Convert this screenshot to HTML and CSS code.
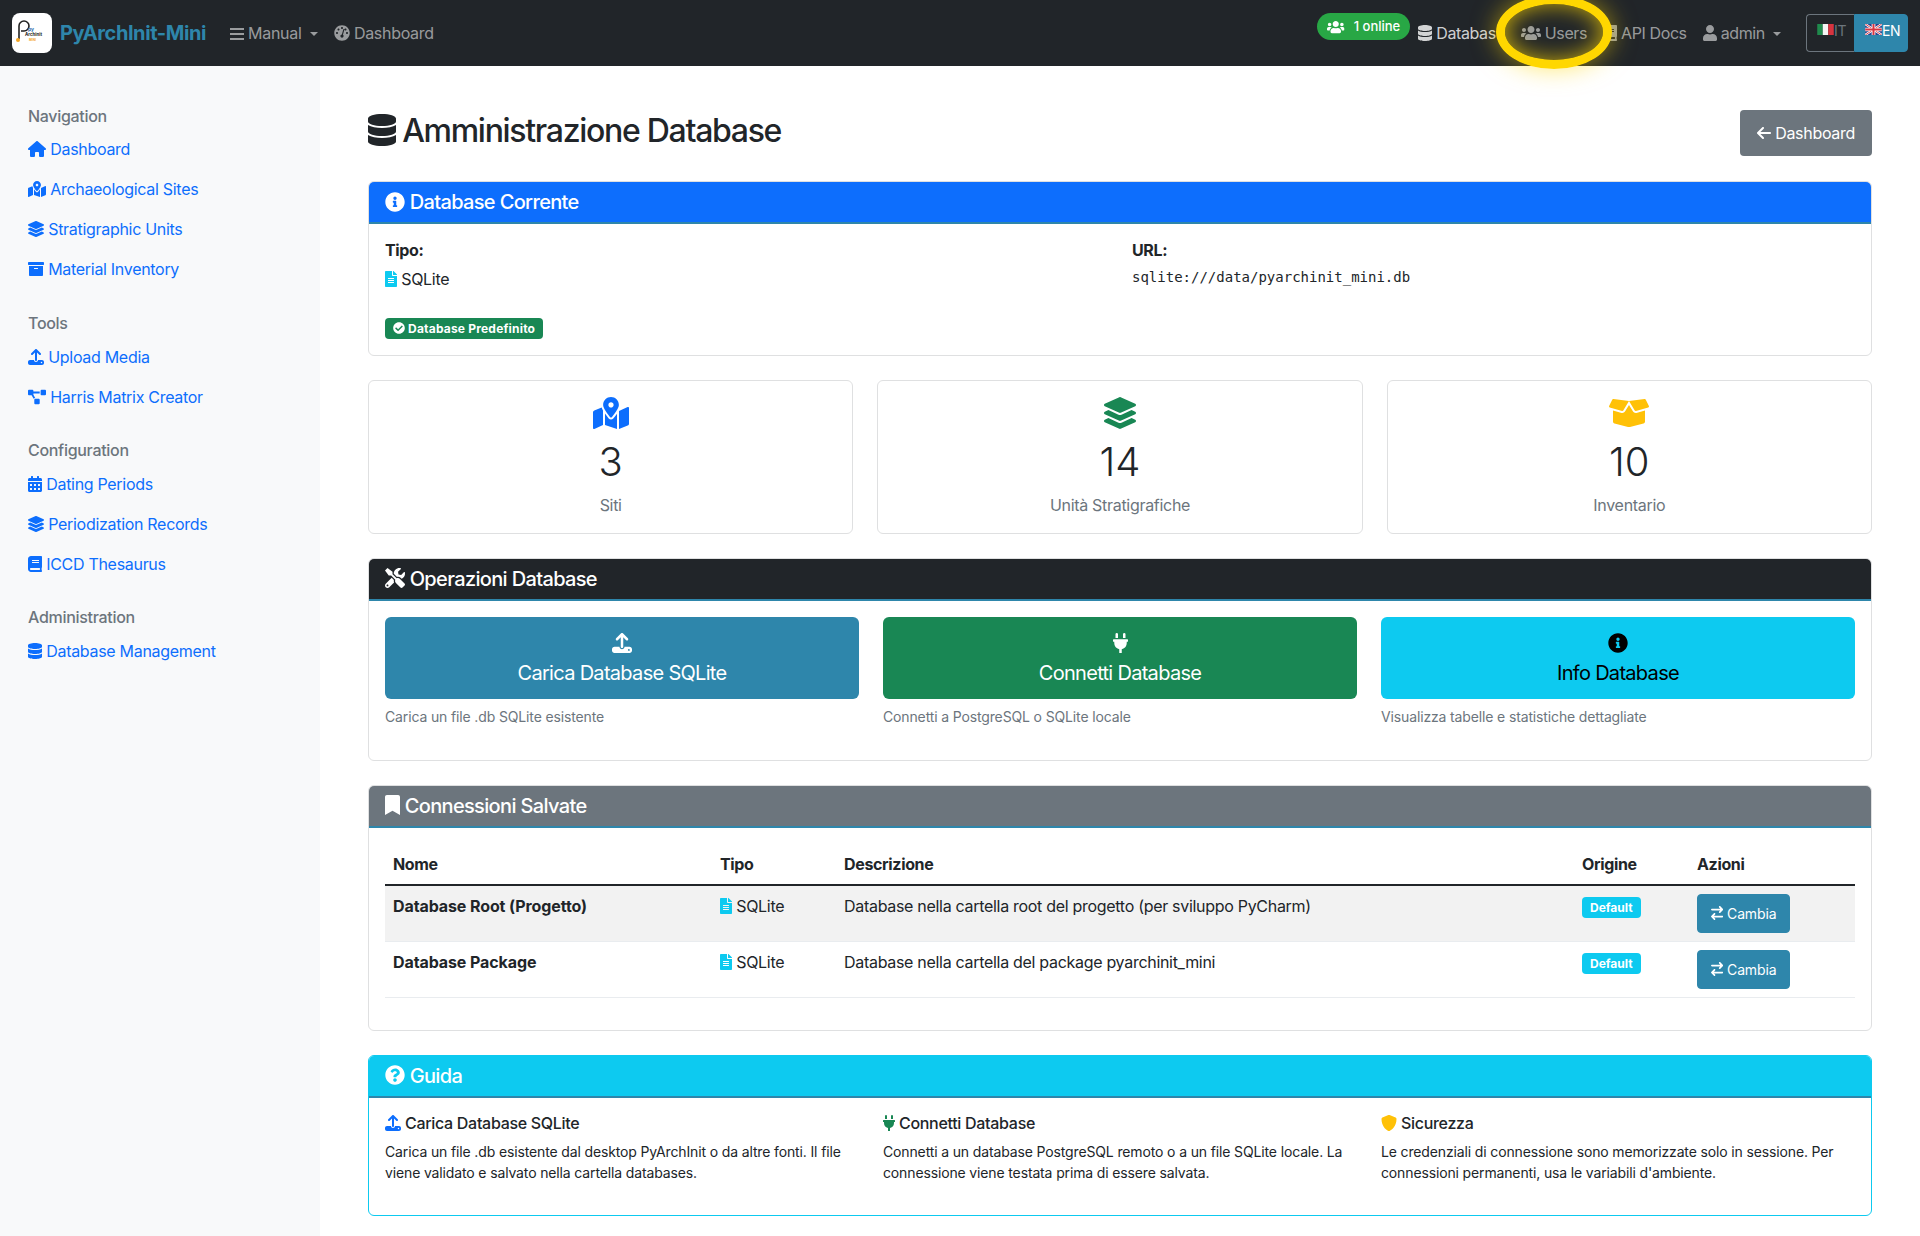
FILE: index.html
```html
<!DOCTYPE html>
<html lang="it">
<head>
  <meta charset="UTF-8" />
  <meta name="viewport" content="width=device-width, initial-scale=1.0"/>
  <title>Amministrazione Database - PyArchInit-Mini</title>
  <link rel="stylesheet" href="styles.css">
</head>
<body>

  <svg class="sprite" xmlns="http://www.w3.org/2000/svg">
    <symbol id="i-database" viewBox="0 0 448 512"><path d="M448 73.143v45.714C448 159.143 347.667 192 224 192S0 159.143 0 118.857V73.143C0 32.857 100.333 0 224 0s224 32.857 224 73.143zM448 176v102.857C448 319.143 347.667 352 224 352S0 319.143 0 278.857V176c48.125 33.143 136.208 48.572 224 48.572S399.874 209.143 448 176zm0 160v102.857C448 479.143 347.667 512 224 512S0 479.143 0 438.857V336c48.125 33.143 136.208 48.572 224 48.572S399.874 369.143 448 336z"/></symbol>
    <symbol id="i-home" viewBox="0 0 576 512"><path d="M575.8 255.5c0 18-15 32.1-32 32.1h-32l.7 160.2c0 2.7-.2 5.4-.5 8.1V472c0 22.1-17.9 40-40 40H456c-1.1 0-2.2 0-3.3-.1c-1.4 .1-2.8 .1-4.2 .1H416 392c-22.1 0-40-17.9-40-40V448 384c0-17.7-14.3-32-32-32H256c-17.7 0-32 14.3-32 32v64 24c0 22.1-17.9 40-40 40H160 128.1c-1.5 0-3-.1-4.5-.2c-1.2 .1-2.4 .2-3.6 .2H104c-22.1 0-40-17.9-40-40V360c0-.9 0-1.9 .1-2.8V287.6H32c-18 0-32-14-32-32.1c0-9 3-17 10-24L266.4 8c7-7 15-8 22-8s15 2 21 7L564.8 231.5c8 7 12 15 11 24z"/></symbol>
    <symbol id="i-users" viewBox="0 0 640 512"><path d="M96 224c35.3 0 64-28.7 64-64s-28.7-64-64-64-64 28.7-64 64 28.7 64 64 64zm448 0c35.3 0 64-28.7 64-64s-28.7-64-64-64-64 28.7-64 64 28.7 64 64 64zm32 32h-64c-17.6 0-33.5 7.1-45.1 18.6 40.3 22.1 68.9 62 75.1 109.4h66c17.7 0 32-14.3 32-32v-32c0-35.3-28.7-64-64-64zm-256 0c61.9 0 112-50.1 112-112S381.9 32 320 32 208 82.1 208 144s50.1 112 112 112zm76.8 32h-8.3c-20.8 10-43.9 16-68.5 16s-47.6-6-68.5-16h-8.3C179.6 288 128 339.6 128 403.2V432c0 26.5 21.5 48 48 48h288c26.5 0 48-21.5 48-48v-28.8c0-63.6-51.6-115.2-115.2-115.2zm-223.7-13.4C161.5 263.1 145.6 256 128 256H64c-35.3 0-64 28.7-64 64v32c0 17.7 14.3 32 32 32h65.9c6.3-47.4 34.9-87.3 75.2-109.4z"/></symbol>
    <symbol id="i-user" viewBox="0 0 448 512"><path d="M224 256c70.7 0 128-57.3 128-128S294.7 0 224 0 96 57.3 96 128s57.3 128 128 128zm89.6 32h-16.7c-22.2 10.2-46.9 16-72.9 16s-50.6-5.8-72.9-16h-16.7C60.2 288 0 348.2 0 422.4V464c0 26.5 21.5 48 48 48h352c26.5 0 48-21.5 48-48v-41.6c0-74.2-60.2-134.4-134.4-134.4z"/></symbol>
    <symbol id="i-info" viewBox="0 0 512 512"><path d="M256 8C119.043 8 8 119.083 8 256c0 136.997 111.043 248 248 248s248-111.003 248-248C504 119.083 392.957 8 256 8zm0 110c23.196 0 42 18.804 42 42s-18.804 42-42 42-42-18.804-42-42 18.804-42 42-42zm56 254c0 6.627-5.373 12-12 12h-88c-6.627 0-12-5.373-12-12v-24c0-6.627 5.373-12 12-12h12v-64h-12c-6.627 0-12-5.373-12-12v-24c0-6.627 5.373-12 12-12h64c6.627 0 12 5.373 12 12v100h12c6.627 0 12 5.373 12 12v24z"/></symbol>
    <symbol id="i-check" viewBox="0 0 512 512"><path d="M504 256c0 136.967-111.033 248-248 248S8 392.967 8 256 119.033 8 256 8s248 111.033 248 248zM227.314 387.314l184-184c6.248-6.248 6.248-16.379 0-22.627l-22.627-22.627c-6.248-6.249-16.379-6.249-22.628 0L216 308.118l-70.059-70.059c-6.248-6.248-16.379-6.248-22.628 0l-22.627 22.627c-6.248 6.248-6.248 16.379 0 22.627l104 104c6.249 6.249 16.379 6.249 22.628.001z"/></symbol>
    <symbol id="i-question" viewBox="0 0 512 512"><path d="M504 256c0 136.997-111.043 248-248 248S8 392.997 8 256C8 119.083 119.043 8 256 8s248 111.083 248 248zM262.655 90c-54.497 0-89.255 22.957-116.549 63.758-3.536 5.286-2.353 12.415 2.715 16.258l34.699 26.31c5.205 3.947 12.621 3.008 16.665-2.122 17.864-22.658 30.113-35.797 57.303-35.797 20.429 0 45.698 13.148 45.698 32.958 0 14.976-12.363 22.667-32.534 33.976C247.128 238.528 216 254.941 216 296v4c0 6.627 5.373 12 12 12h56c6.627 0 12-5.373 12-12v-1.333c0-28.462 83.186-29.647 83.186-106.667 0-58.002-60.165-102-116.531-102zM256 338c-25.365 0-46 20.635-46 46 0 25.364 20.635 46 46 46s46-20.636 46-46c0-25.365-20.635-46-46-46z"/></symbol>
    <symbol id="i-bookmark" viewBox="0 0 384 512"><path d="M0 512V48C0 21.49 21.49 0 48 0h288c26.51 0 48 21.49 48 48v464L192 400 0 512z"/></symbol>
    <symbol id="i-file" viewBox="0 0 384 512"><path d="M224 136V0H24C10.7 0 0 10.7 0 24v464c0 13.3 10.7 24 24 24h336c13.3 0 24-10.7 24-24V160H248c-13.2 0-24-10.8-24-24zm64 236c0 6.6-5.4 12-12 12H108c-6.6 0-12-5.4-12-12v-8c0-6.6 5.4-12 12-12h168c6.6 0 12 5.4 12 12v8zm0-64c0 6.6-5.4 12-12 12H108c-6.6 0-12-5.4-12-12v-8c0-6.6 5.4-12 12-12h168c6.6 0 12 5.4 12 12v8zm0-72v8c0 6.6-5.4 12-12 12H108c-6.6 0-12-5.4-12-12v-8c0-6.6 5.4-12 12-12h168c6.6 0 12 5.4 12 12zm96-114.1v6.1H256V0h6.1c6.4 0 12.5 2.5 17 7l97.9 98c4.5 4.5 7 10.6 7 16.9z"/></symbol>
    <symbol id="i-upload" viewBox="0 0 512 512"><path d="M288 109.3V352c0 17.7-14.3 32-32 32s-32-14.3-32-32V109.3l-73.4 73.4c-12.5 12.5-32.8 12.5-45.3 0s-12.5-32.8 0-45.3l128-128c12.5-12.5 32.8-12.5 45.3 0l128 128c12.5 12.5 12.5 32.8 0 45.3s-32.8 12.5-45.3 0L288 109.3zM64 352H192c0 35.3 28.7 64 64 64s64-28.7 64-64H448c35.3 0 64 28.7 64 64v32c0 35.3-28.7 64-64 64H64c-35.3 0-64-28.7-64-64V416c0-35.3 28.7-64 64-64zM432 456a24 24 0 1 0 0-48 24 24 0 1 0 0 48z"/></symbol>
    <symbol id="i-plug" viewBox="0 0 384 512"><path d="M320 32a32 32 0 0 0-64 0v96h64zm48 128H16a16 16 0 0 0-16 16v32a16 16 0 0 0 16 16h16v32a160.07 160.07 0 0 0 128 156.8V512h64v-99.2A160.07 160.07 0 0 0 352 256v-32h16a16 16 0 0 0 16-16v-32a16 16 0 0 0-16-16zM128 32a32 32 0 0 0-64 0v96h64z"/></symbol>
    <symbol id="i-layers" viewBox="0 0 512 512"><path d="M12.41 148.02l232.94 105.67c6.8 3.09 14.49 3.09 21.29 0l232.94-105.67c16.55-7.51 16.55-32.52 0-40.03L266.65 2.31a25.607 25.607 0 0 0-21.29 0L12.41 107.98c-16.55 7.51-16.55 32.53 0 40.04zm487.18 88.28l-58.09-26.33-161.64 73.27c-7.56 3.43-15.59 5.17-23.86 5.17s-16.29-1.74-23.86-5.17L70.51 209.97l-58.1 26.33c-16.55 7.5-16.55 32.5 0 40l232.94 105.59c6.8 3.08 14.49 3.08 21.29 0L499.59 276.3c16.55-7.5 16.55-32.5 0-40zm0 127.8l-57.87-26.23-161.86 73.37c-7.56 3.43-15.59 5.17-23.86 5.17s-16.29-1.74-23.86-5.17L70.29 337.87 12.41 364.1c-16.55 7.5-16.55 32.5 0 40l232.94 105.59c6.8 3.08 14.49 3.08 21.29 0L499.59 404.1c16.55-7.5 16.55-32.5 0-40z"/></symbol>
    <symbol id="i-archive" viewBox="0 0 512 512"><path d="M32 448c0 17.7 14.3 32 32 32h384c17.7 0 32-14.3 32-32V160H32v288zm160-212c0-6.6 5.4-12 12-12h104c6.6 0 12 5.4 12 12v8c0 6.6-5.4 12-12 12H204c-6.6 0-12-5.4-12-12v-8zM480 32H32C14.3 32 0 46.3 0 64v48c0 8.8 7.2 16 16 16h480c8.8 0 16-7.2 16-16V64c0-17.7-14.3-32-32-32z"/></symbol>
    <symbol id="i-calendar" viewBox="0 0 448 512"><path d="M0 464c0 26.5 21.5 48 48 48h352c26.5 0 48-21.5 48-48V192H0v272zm320-196c0-6.6 5.4-12 12-12h40c6.6 0 12 5.4 12 12v40c0 6.6-5.4 12-12 12h-40c-6.6 0-12-5.4-12-12v-40zm0 128c0-6.6 5.4-12 12-12h40c6.6 0 12 5.4 12 12v40c0 6.6-5.4 12-12 12h-40c-6.6 0-12-5.4-12-12v-40zM192 268c0-6.6 5.4-12 12-12h40c6.6 0 12 5.4 12 12v40c0 6.6-5.4 12-12 12h-40c-6.6 0-12-5.4-12-12v-40zm0 128c0-6.6 5.4-12 12-12h40c6.6 0 12 5.4 12 12v40c0 6.6-5.4 12-12 12h-40c-6.6 0-12-5.4-12-12v-40zM64 268c0-6.6 5.4-12 12-12h40c6.6 0 12 5.4 12 12v40c0 6.6-5.4 12-12 12H76c-6.6 0-12-5.4-12-12v-40zm0 128c0-6.6 5.4-12 12-12h40c6.6 0 12 5.4 12 12v40c0 6.6-5.4 12-12 12H76c-6.6 0-12-5.4-12-12v-40zM400 64h-48V16c0-8.8-7.2-16-16-16h-32c-8.8 0-16 7.2-16 16v48H160V16c0-8.8-7.2-16-16-16h-32c-8.8 0-16 7.2-16 16v48H48C21.5 64 0 85.5 0 112v48h448v-48c0-26.5-21.5-48-48-48z"/></symbol>
    <symbol id="i-book" viewBox="0 0 448 512"><path d="M448 360V24c0-13.3-10.7-24-24-24H96C43 0 0 43 0 96v320c0 53 43 96 96 96h328c13.3 0 24-10.7 24-24v-16c0-7.5-3.5-14.3-8.9-18.7-4.2-15.4-4.2-59.3 0-74.7 5.4-4.3 8.9-11.1 8.9-18.6zM128 134c0-3.3 2.7-6 6-6h212c3.3 0 6 2.7 6 6v20c0 3.3-2.7 6-6 6H134c-3.3 0-6-2.7-6-6v-20zm0 64c0-3.3 2.7-6 6-6h212c3.3 0 6 2.7 6 6v20c0 3.3-2.7 6-6 6H134c-3.3 0-6-2.7-6-6v-20zm253.4 250H96c-17.7 0-32-14.3-32-32 0-17.6 14.4-32 32-32h285.4c-1.9 17.1-1.9 46.9 0 64z"/></symbol>
    <symbol id="i-exchange" viewBox="0 0 448 512"><path d="M438.6 150.6c12.5-12.5 12.5-32.8 0-45.3l-96-96c-12.5-12.5-32.8-12.5-45.3 0s-12.5 32.8 0 45.3L338.7 96 32 96C14.3 96 0 110.3 0 128s14.3 32 32 32l306.7 0-41.4 41.4c-12.5 12.5-12.5 32.8 0 45.3s32.8 12.5 45.3 0l96-96zm-333.3 352c12.5 12.5 32.8 12.5 45.3 0s12.5-32.8 0-45.3L109.3 416 416 416c17.7 0 32-14.3 32-32s-14.3-32-32-32l-306.7 0 41.4-41.4c12.5-12.5 12.5-32.8 0-45.3s-32.8-12.5-45.3 0l-96 96c-12.5 12.5-12.5 32.8 0 45.3l96 96z"/></symbol>
    <symbol id="i-arrow" viewBox="0 0 448 512"><path d="M9.4 233.4c-12.5 12.5-12.5 32.8 0 45.3l160 160c12.5 12.5 32.8 12.5 45.3 0s12.5-32.8 0-45.3L109.2 288 416 288c17.7 0 32-14.3 32-32s-14.3-32-32-32l-306.7 0L214.6 118.6c12.5-12.5 12.5-32.8 0-45.3s-32.8-12.5-45.3 0l-160 160z"/></symbol>
    <symbol id="i-shield" viewBox="0 0 512 512"><path d="M466.5 83.7l-192-80a48.15 48.15 0 0 0-36.9 0l-192 80C27.7 91.1 16 108.6 16 128c0 198.5 114.5 335.7 221.5 380.3 11.8 4.9 25.1 4.9 36.9 0C360.1 472.6 496 349.3 496 128c0-19.4-11.7-36.9-29.5-44.3z"/></symbol>
    <symbol id="i-map" viewBox="0 0 576 512"><path d="M288 0c-69.59 0-126 56.41-126 126 0 56.26 82.35 158.8 113.9 196.02 6.39 7.54 17.82 7.54 24.2 0C331.65 284.8 414 182.26 414 126 414 56.41 357.59 0 288 0zm0 168c-23.2 0-42-18.8-42-42s18.8-42 42-42 42 18.8 42 42-18.8 42-42 42zM20.12 215.95A32.006 32.006 0 0 0 0 245.66v250.32c0 11.32 11.43 19.06 21.94 14.86L160 448V214.92c-8.84-15.98-16.07-31.54-21.25-46.42L20.12 215.95zM288 359.67c-14.07 0-27.38-6.18-36.51-16.96-19.66-23.2-40.57-49.62-59.49-76.72v182l192 64V266c-18.92 27.09-39.82 53.52-59.49 76.72-9.13 10.77-22.44 16.95-36.51 16.95zm266.06-198.51L416 224v288l139.88-55.95A31.996 31.996 0 0 0 576 426.34V176.02c0-11.32-11.43-19.06-21.94-14.86z"/></symbol>
    <symbol id="i-diagram" viewBox="0 0 640 512"><path d="M384 320H256c-17.67 0-32 14.33-32 32v128c0 17.67 14.33 32 32 32h128c17.67 0 32-14.33 32-32V352c0-17.67-14.33-32-32-32zM192 32c0-17.67-14.33-32-32-32H32C14.33 0 0 14.33 0 32v128c0 17.67 14.33 32 32 32h95.72l73.16 128.04C211.98 300.98 232.4 288 256 288h.28L192 175.51V128h224V64H192V32zM608 0H480c-17.67 0-32 14.33-32 32v128c0 17.67 14.33 32 32 32h128c17.67 0 32-14.33 32-32V32c0-17.67-14.33-32-32-32z"/></symbol>
    <symbol id="i-box" viewBox="0 0 640 512"><path d="M425.7 256c-16.9 0-32.8-9-41.4-23.4L320 126l-64.2 106.6c-8.7 14.5-24.6 23.5-41.5 23.5-4.5 0-9-.6-13.3-1.9L64 215v178c0 14.7 10 27.5 24.2 31l216.2 54.1c10.2 2.5 20.9 2.5 31 0L551.8 424c14.2-3.6 24.2-16.4 24.2-31V215l-137 39.1c-4.3 1.3-8.8 1.9-13.3 1.9zm212.6-112.2L586.8 41c-3.1-6.2-9.8-9.8-16.7-8.9L320 64l91.7 152.1c3.8 6.3 11.4 9.3 18.5 7.3l197.9-56.5c9.9-2.9 14.7-13.9 10.2-23.1zM53.2 41L1.7 143.8c-4.6 9.2.3 20.2 10.1 23l197.9 56.5c7.1 2 14.7-1 18.5-7.3L320 64 69.8 32.1c-6.9-.8-13.5 2.7-16.6 8.9z"/></symbol>
    <symbol id="i-tools" viewBox="0 0 512 512"><path d="M501.1 395.7L384 278.6c-23.1-23.1-57.6-27.6-85.4-13.9L192 158.1V96L64 0 0 64l96 128h62.1l106.6 106.6c-13.6 27.8-9.2 62.3 13.9 85.4l117.1 117.1c14.6 14.6 38.2 14.6 52.7 0l52.7-52.7c14.5-14.6 14.5-38.2 0-52.7zM331.7 225c28.3 0 54.9 11 74.9 31l19.4 19.4c15.8-6.9 30.8-16.5 43.8-29.5 37.1-37.1 49.7-89.3 37.9-136.7-2.2-9-13.5-12.1-20.1-5.5l-74.4 74.4-67.9-11.3L334 98.9l74.4-74.4c6.6-6.6 3.4-17.9-5.7-20.2-47.4-11.7-99.6.9-136.6 37.9-28.5 28.5-41.9 66.1-41.2 103.6l82.1 82.1c8.1-1.9 16.5-2.9 24.7-2.9zm-103.9 82l-56.7-56.7L18.7 402.8c-25 25-25 65.5 0 90.5s65.5 25 90.5 0l123.6-123.6c-7.6-19.9-9.9-41.6-5-62.7zM64 472c-13.2 0-24-10.8-24-24 0-13.3 10.7-24 24-24s24 10.7 24 24c0 13.2-10.7 24-24 24z"/></symbol>
    <symbol id="i-gauge" viewBox="0 0 512 512"><path d="M256 8C119 8 8 119 8 256s111 248 248 248 248-111 248-248S393 8 256 8zm0 56c17.7 0 32 14.3 32 32s-14.3 32-32 32-32-14.3-32-32 14.3-32 32-32zM96 288c-17.7 0-32-14.3-32-32s14.3-32 32-32 32 14.3 32 32-14.3 32-32 32zm48-112c-17.7 0-32-14.3-32-32s14.3-32 32-32 32 14.3 32 32-14.3 32-32 32zm184-16l-42 152c14 9 22 24 22 40 0 28-24 52-52 52s-52-24-52-52 22-50 48-52l42-152c3-12 16-20 28-16s20 16 16 28zm88 128c-17.7 0-32-14.3-32-32s14.3-32 32-32 32 14.3 32 32-14.3 32-32 32zm-48-112c-17.7 0-32-14.3-32-32s14.3-32 32-32 32 14.3 32 32-14.3 32-32 32z"/></symbol>
  </svg>

  <nav class="navbar">
    <a class="brand" href="#">
      <svg class="logo" viewBox="0 0 40 40">
        <rect width="40" height="40" rx="8" fill="#fff"/>
        <path d="M7 26V13a5 5 0 1 1 5 5H9" fill="none" stroke="#222" stroke-width="1.6"/>
        <circle cx="6" cy="27" r="2" fill="#f5a623"/>
        <text class="logo-py" x="16" y="18">py</text>
        <text class="logo-name" x="13" y="23">Archinit</text>
        <text class="logo-mini" x="17" y="28">MINI</text>
      </svg>
      <span>PyArchInit-Mini</span>
    </a>
    <div class="nav-left">
      <a class="nav-link" href="#"><span class="bars"></span> Manual <span class="caret"></span></a>
      <a class="nav-link" href="#"><svg class="ico w-512"><use href="#i-gauge"/></svg> Dashboard</a>
    </div>
    <div class="nav-right">
      <span class="online"><svg class="ico w-640"><use href="#i-users"/></svg> <span class="online-text">1 online</span></span>
      <a class="nav-link nav-db" href="#"><svg class="ico w-448"><use href="#i-database"/></svg> Databas</a>
      <a class="nav-link nav-users" href="#"><svg class="ico w-640"><use href="#i-users"/></svg> Users<span class="ring"></span></a>
      <a class="nav-link" href="#"><svg class="ico w-448"><use href="#i-book"/></svg> API Docs</a>
      <a class="nav-link" href="#"><svg class="ico w-448"><use href="#i-user"/></svg> admin <span class="caret"></span></a>
      <div class="lang">
        <a class="lang-btn" href="#">
          <svg class="flag" viewBox="0 0 18 12"><rect width="6" height="12" fill="#1f8a4c"/><rect x="6" width="6" height="12" fill="#f4f4f4"/><rect x="12" width="6" height="12" fill="#d8343f"/></svg>IT
        </a>
        <a class="lang-btn active" href="#">
          <svg class="flag" viewBox="0 0 18 12"><rect width="18" height="12" fill="#2b3f8c"/><path d="M0 0l18 12M18 0L0 12" stroke="#fff" stroke-width="2.4"/><path d="M0 0l18 12M18 0L0 12" stroke="#d8343f" stroke-width="1"/><path d="M9 0v12M0 6h18" stroke="#fff" stroke-width="4"/><path d="M9 0v12M0 6h18" stroke="#d8343f" stroke-width="2.2"/></svg>EN
        </a>
      </div>
    </div>
  </nav>

  <div class="layout">
    <aside class="sidebar">
      <div class="side-group">
        <h6>Navigation</h6>
        <a href="#"><svg class="ico w-576"><use href="#i-home"/></svg> Dashboard</a>
        <a href="#"><svg class="ico w-576"><use href="#i-map"/></svg> Archaeological Sites</a>
        <a href="#"><svg class="ico w-512"><use href="#i-layers"/></svg> Stratigraphic Units</a>
        <a href="#"><svg class="ico w-512"><use href="#i-archive"/></svg> Material Inventory</a>
      </div>
      <div class="side-group">
        <h6>Tools</h6>
        <a href="#"><svg class="ico w-512"><use href="#i-upload"/></svg> Upload Media</a>
        <a href="#"><svg class="ico w-576"><use href="#i-diagram"/></svg> Harris Matrix Creator</a>
      </div>
      <div class="side-group">
        <h6>Configuration</h6>
        <a href="#"><svg class="ico w-448"><use href="#i-calendar"/></svg> Dating Periods</a>
        <a href="#"><svg class="ico w-512"><use href="#i-layers"/></svg> Periodization Records</a>
        <a href="#"><svg class="ico w-448"><use href="#i-book"/></svg> ICCD Thesaurus</a>
      </div>
      <div class="side-group">
        <h6>Administration</h6>
        <a href="#"><svg class="ico w-448"><use href="#i-database"/></svg> Database Management</a>
      </div>
    </aside>

    <main class="main">
      <div class="page-head">
        <h2><svg class="ico w-448"><use href="#i-database"/></svg> Amministrazione Database</h2>
        <a class="btn btn-grey" href="#"><svg class="ico w-448"><use href="#i-arrow"/></svg> Dashboard</a>
      </div>

      <section class="card">
        <h5 class="card-header bg-blue"><svg class="ico w-512"><use href="#i-info"/></svg> Database Corrente</h5>
        <div class="card-body">
          <div class="current-row">
            <div>
              <p class="field-label">Tipo:</p>
              <p class="field-value"><svg class="ico w-384 c-cyan"><use href="#i-file"/></svg> SQLite</p>
            </div>
            <div>
              <p class="field-label">URL:</p>
              <code>sqlite:///data/pyarchinit_mini.db</code>
            </div>
          </div>
          <span class="badge badge-green"><svg class="ico w-512"><use href="#i-check"/></svg> Database Predefinito</span>
        </div>
      </section>

      <div class="stats">
        <div class="stat">
          <svg class="ico stat-icon c-blue"><use href="#i-map"/></svg>
          <div class="stat-num">3</div>
          <div class="stat-label">Siti</div>
        </div>
        <div class="stat">
          <svg class="ico stat-icon c-green"><use href="#i-layers"/></svg>
          <div class="stat-num">14</div>
          <div class="stat-label">Unità Stratigrafiche</div>
        </div>
        <div class="stat">
          <svg class="ico stat-icon c-yellow"><use href="#i-box"/></svg>
          <div class="stat-num">10</div>
          <div class="stat-label">Inventario</div>
        </div>
      </div>

      <section class="card">
        <h5 class="card-header bg-dark"><svg class="ico w-512"><use href="#i-tools"/></svg> Operazioni Database</h5>
        <div class="card-body ops">
          <div class="op">
            <a class="op-btn op-teal" href="#"><svg class="ico w-512"><use href="#i-upload"/></svg>Carica Database SQLite</a>
            <small>Carica un file .db SQLite esistente</small>
          </div>
          <div class="op">
            <a class="op-btn op-green" href="#"><svg class="ico w-384"><use href="#i-plug"/></svg>Connetti Database</a>
            <small>Connetti a PostgreSQL o SQLite locale</small>
          </div>
          <div class="op">
            <a class="op-btn op-cyan" href="#"><svg class="ico w-512"><use href="#i-info"/></svg>Info Database</a>
            <small>Visualizza tabelle e statistiche dettagliate</small>
          </div>
        </div>
      </section>

      <section class="card">
        <h5 class="card-header bg-grey"><svg class="ico w-384"><use href="#i-bookmark"/></svg> Connessioni Salvate</h5>
        <div class="card-body">
          <table class="conn-table">
            <colgroup>
              <col class="col-name"><col class="col-type"><col class="col-desc"><col class="col-orig"><col>
            </colgroup>
            <thead>
              <tr><th>Nome</th><th>Tipo</th><th>Descrizione</th><th>Origine</th><th>Azioni</th></tr>
            </thead>
            <tbody>
              <tr class="striped">
                <td><strong>Database Root (Progetto)</strong></td>
                <td><svg class="ico w-384 c-cyan"><use href="#i-file"/></svg> SQLite</td>
                <td>Database nella cartella root del progetto (per sviluppo PyCharm)</td>
                <td><span class="badge badge-cyan">Default</span></td>
                <td><a class="btn-switch" href="#"><svg class="ico w-448"><use href="#i-exchange"/></svg> Cambia</a></td>
              </tr>
              <tr>
                <td><strong>Database Package</strong></td>
                <td><svg class="ico w-384 c-cyan"><use href="#i-file"/></svg> SQLite</td>
                <td>Database nella cartella del package pyarchinit_mini</td>
                <td><span class="badge badge-cyan">Default</span></td>
                <td><a class="btn-switch" href="#"><svg class="ico w-448"><use href="#i-exchange"/></svg> Cambia</a></td>
              </tr>
            </tbody>
          </table>
        </div>
      </section>

      <section class="card card-cyan">
        <h5 class="card-header bg-cyan"><svg class="ico w-512"><use href="#i-question"/></svg> Guida</h5>
        <div class="card-body guide">
          <div>
            <h6><svg class="ico w-512 c-blue"><use href="#i-upload"/></svg> Carica Database SQLite</h6>
            <p>Carica un file .db esistente dal desktop PyArchInit o da altre fonti. Il file viene validato e salvato nella cartella databases.</p>
          </div>
          <div>
            <h6><svg class="ico w-384 c-green"><use href="#i-plug"/></svg> Connetti Database</h6>
            <p>Connetti a un database PostgreSQL remoto o a un file SQLite locale. La connessione viene testata prima di essere salvata.</p>
          </div>
          <div>
            <h6><svg class="ico w-512 c-yellow"><use href="#i-shield"/></svg> Sicurezza</h6>
            <p>Le credenziali di connessione sono memorizzate solo in sessione. Per connessioni permanenti, usa le variabili d'ambiente.</p>
          </div>
        </div>
      </section>
    </main>
  </div>

</body>
</html>
```

FILE: styles.css
```css
* {
  box-sizing: border-box;
}

body {
  margin: 0;
  font-family: Inter, "Noto Sans", sans-serif;
  font-size: 16px;
  line-height: 1.5;
  letter-spacing: -0.3px;
  color: #212529;
  background: #fff;
}

a {
  text-decoration: none;
}

.sprite {
  display: none;
}

.ico {
  display: inline-block;
  height: 1em;
  fill: currentColor;
  vertical-align: -0.125em;
}

.w-384 { width: 0.75em; }
.w-448 { width: 0.875em; }
.w-512 { width: 1em; }
.w-576 { width: 1.125em; }
.w-640 { width: 1.25em; }

.c-blue { color: #0d6efd; }
.c-cyan { color: #0dcaf0; }
.c-green { color: #198754; }
.c-yellow { color: #ffc107; }

/* top bar */
.navbar {
  position: relative;
  z-index: 10;
  display: flex;
  align-items: center;
  height: 66px;
  padding: 0 12px;
  background: #212529;
}

.brand {
  display: flex;
  align-items: center;
  gap: 8px;
  margin-right: 16px;
  font-size: 20px;
  font-weight: 700;
  letter-spacing: -0.42px;
  color: #2e86ab;
}

.logo {
  width: 40px;
  height: 40px;
  letter-spacing: 0;
}

.logo-py {
  font: 700 5px Inter, sans-serif;
  fill: #2e6fb0;
}

.logo-name {
  font: 700 4.4px Inter, sans-serif;
  fill: #222;
}

.logo-mini {
  font: 700 3px Inter, sans-serif;
  fill: #f5a623;
}

.nav-left,
.nav-right {
  display: flex;
  align-items: center;
}

.nav-right {
  align-self: stretch;
  margin-left: auto;
}

.nav-link {
  display: block;
  padding: 8px;
  color: rgba(255, 255, 255, 0.55);
  white-space: nowrap;
}

.nav-right .nav-link {
  letter-spacing: -0.4px;
}

.nav-db {
  margin-right: 9px;
}

.nav-right .nav-db {
  color: rgba(255, 255, 255, 0.8);
}

.nav-users {
  position: relative;
}

.bars {
  display: inline-block;
  width: 14px;
  height: 12px;
  border-top: 2px solid currentColor;
  border-bottom: 2px solid currentColor;
  background: linear-gradient(currentColor, currentColor) center / 100% 2px no-repeat;
  vertical-align: -1px;
}

.caret {
  display: inline-block;
  margin-left: 4px;
  border-top: 4.8px solid currentColor;
  border-left: 4.8px solid transparent;
  border-right: 4.8px solid transparent;
  vertical-align: 3px;
}

.online {
  display: flex;
  align-items: center;
  align-self: flex-start;
  gap: 9px;
  height: 27px;
  margin-top: 13px;
  padding: 0 10px;
  border-radius: 13.5px;
  background: #28a745;
  color: #fff;
  font-size: 14px;
}

.online-text {
  font-size: 13px;
  font-weight: 500;
  letter-spacing: 0;
}

.ring {
  position: absolute;
  left: 50%;
  top: 50%;
  width: 116px;
  height: 74px;
  margin: -38px 0 0 -58px;
  border: 9px solid #ffd700;
  border-radius: 50%;
  box-shadow: 0 0 24px rgba(255, 215, 0, 0.55), inset 0 0 22px rgba(255, 215, 0, 0.75);
  pointer-events: none;
}

.lang {
  display: flex;
  margin-left: 17px;
  height: 38px;
}

.lang-btn {
  display: flex;
  align-items: flex-start;
  width: 48px;
  padding: 8px 0 0 10px;
  border: 1px solid #6c757d;
  border-right: 0;
  border-radius: 4px 0 0 4px;
  color: #6c757d;
  font-size: 14px;
  line-height: 16px;
}

.lang-btn.active {
  width: 54px;
  border: 1px solid #2e86ab;
  border-radius: 0 4px 4px 0;
  background: #2e86ab;
  color: #fff;
}

.flag {
  width: 17px;
  height: 11px;
  margin-top: 1px;
}

/* sidebar */
.layout {
  display: flex;
  min-height: 1170px;
}

.sidebar {
  flex: 0 0 320px;
  padding: 38px 28px 0;
  background: #f8f9fa;
}

.side-group {
  margin-bottom: 29px;
}

.side-group:first-child {
  margin-bottom: 30px;
}

.side-group h6 {
  margin: 0 0 10px;
  font-size: 16px;
  font-weight: 500;
  line-height: 24px;
  color: #6c757d;
}

.side-group:first-child h6 {
  margin-bottom: 9px;
}

.side-group a {
  display: block;
  margin-bottom: 16px;
  line-height: 24px;
  color: #0d6efd;
}

/* content */
.main {
  flex: 1;
  min-width: 0;
  padding: 44px 48px 20px;
}

.page-head {
  display: flex;
  justify-content: space-between;
  align-items: center;
  margin-bottom: 25px;
}

.page-head h2 {
  margin: 0;
  padding-bottom: 5px;
  font-size: 32px;
  font-weight: 500;
  line-height: 38px;
  letter-spacing: -1.3px;
}

.page-head h2 .ico {
  margin-right: -1px;
}

.btn {
  display: block;
  padding: 11px 17px;
  border-radius: 4px;
  color: #fff;
  line-height: 24px;
}

.btn-grey {
  background: #6c757d;
}

.card {
  margin-bottom: 24px;
  border: 1px solid #dfe0e1;
  border-radius: 6px;
  overflow: hidden;
}

.card-cyan {
  border-color: #0dcaf0;
}

.card-header {
  margin: 0;
  padding: 8px 16px;
  border-bottom: 2px solid #2e86ab;
  font-size: 20px;
  font-weight: 500;
  line-height: 24px;
  letter-spacing: -0.65px;
  color: #fff;
}

.bg-blue { background: #0d6efd; }
.bg-dark { background: #212529; }
.bg-grey { background: #6c757d; }
.bg-cyan { background: #0dcaf0; }

.card-body {
  padding: 16px;
}

.current-row {
  display: grid;
  grid-template-columns: 1fr 1fr;
  column-gap: 24px;
  margin-bottom: 26.5px;
}

.field-label {
  margin: 0 0 7px;
  font-weight: 700;
  line-height: 20px;
  letter-spacing: -0.35px;
}

.field-value {
  margin: 0;
}

code {
  display: block;
  font-family: "DejaVu Sans Mono", monospace;
  font-size: 14px;
  line-height: 21px;
  letter-spacing: 0;
}

.badge {
  display: block;
  width: fit-content;
  padding: 3px 8px;
  border-radius: 4px;
  font-size: 12px;
  font-weight: 700;
  line-height: 15px;
  letter-spacing: 0;
  color: #fff;
}

.badge-green {
  background: #198754;
  letter-spacing: 0.2px;
}

.badge-cyan {
  margin-top: 3px;
  background: #0dcaf0;
}

/* counters */
.stats {
  display: grid;
  grid-template-columns: repeat(3, 1fr);
  gap: 24px;
  margin-bottom: 24px;
}

.stat {
  height: 154px;
  padding: 16px;
  border: 1px solid #dfe0e1;
  border-radius: 6px;
  text-align: center;
}

.stat-icon {
  display: block;
  width: 40px;
  height: 32px;
  margin: 0 auto 9px;
}

.stat-num {
  margin-bottom: 7px;
  font-size: 40px;
  font-weight: 300;
  line-height: 48px;
  letter-spacing: 0;
}

.stat-label {
  color: #6c757d;
}

/* operations */
.ops {
  display: grid;
  grid-template-columns: repeat(3, 1fr);
  column-gap: 24px;
}

.op small {
  display: block;
  margin: 7px 0 17px;
  font-size: 14px;
  line-height: 21px;
  letter-spacing: -0.14px;
  color: #6c757d;
}

.op-btn {
  display: block;
  height: 82px;
  padding-top: 16px;
  border-radius: 6px;
  font-size: 20px;
  line-height: 30px;
  letter-spacing: -0.7px;
  text-align: center;
  color: #fff;
}

.op-btn .ico {
  display: block;
  height: 20px;
  margin: 0 auto 5px;
}

.op-teal { background: #2e86ab; }
.op-green { background: #198754; }
.op-cyan { background: #0dcaf0; color: #000; }

/* saved connections */
.conn-table {
  width: 100%;
  margin-bottom: 16px;
  border-collapse: collapse;
  table-layout: fixed;
}

.col-name { width: 327px; }
.col-type { width: 124px; }
.col-desc { width: 738px; }
.col-orig { width: 115px; }

.conn-table th {
  padding: 8px;
  border-bottom: 2px solid #212529;
  font-weight: 700;
  letter-spacing: -0.35px;
  text-align: left;
}

.conn-table td {
  height: 56px;
  padding: 8px;
  border-bottom: 1px solid #e9ecef;
  vertical-align: top;
}

.conn-table strong {
  font-weight: 700;
  letter-spacing: -0.1px;
}

.striped {
  background: #f2f2f2;
}

.btn-switch {
  display: block;
  width: fit-content;
  padding: 8px 13px;
  border: 1px solid #2e86ab;
  border-radius: 4px;
  background: #2e86ab;
  color: #fff;
  font-size: 14px;
  line-height: 21px;
  letter-spacing: -0.14px;
}

/* help */
.guide {
  display: grid;
  grid-template-columns: repeat(3, 1fr);
  column-gap: 24px;
}

.guide h6 {
  margin: 0 0 8px;
  font-size: 16px;
  font-weight: 500;
  line-height: 19px;
}

.guide p {
  margin: 0 0 16px;
  font-size: 14px;
  line-height: 21px;
  letter-spacing: -0.14px;
}
```
